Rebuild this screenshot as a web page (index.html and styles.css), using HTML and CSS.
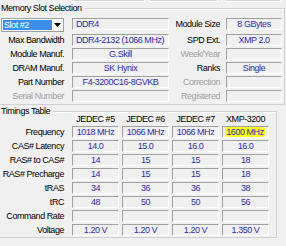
FILE: index.html
```html
<!DOCTYPE html>
<html lang="en">
<head>
    <meta charset="UTF-8">
    <meta name="viewport" content="width=device-width, initial-scale=1.0">
    <title>SPD</title>
    <link rel="stylesheet" href="styles.css">
</head>
<body>
    <div class="top-strip">
        <span class="stub stub-a"></span>
        <span class="stub stub-b"></span>
        <span class="stub stub-c"></span>
    </div>

    <div class="group slot-group">
        <div class="group-title">Memory Slot Selection</div>
        <div class="slot-grid">
            <div class="combo">
                <span class="combo-value">Slot #2</span>
                <span class="combo-btn">
                    <svg width="7" height="4" viewBox="0 0 7 4"><polygon points="0,0 7,0 3.5,4" fill="#000"/></svg>
                </span>
            </div>
            <div class="box left">DDR4</div>
            <div class="label">Module Size</div>
            <div class="box">8 GBytes</div>

            <div class="label">Max Bandwidth</div>
            <div class="box left">DDR4-2132 (1066 MHz)</div>
            <div class="label">SPD Ext.</div>
            <div class="box">XMP 2.0</div>

            <div class="label">Module Manuf.</div>
            <div class="box">G.Skill</div>
            <div class="label off">Week/Year</div>
            <div class="box"></div>

            <div class="label">DRAM Manuf.</div>
            <div class="box">SK Hynix</div>
            <div class="label">Ranks</div>
            <div class="box">Single</div>

            <div class="label">Part Number</div>
            <div class="box">F4-3200C16-8GVKB</div>
            <div class="label off">Correction</div>
            <div class="box"></div>

            <div class="label off">Serial Number</div>
            <div class="box"></div>
            <div class="label off">Registered</div>
            <div class="box"></div>
        </div>
    </div>

    <div class="group timings-group">
        <div class="group-title">Timings Table</div>
        <div class="timings-grid">
            <div></div>
            <div class="head">JEDEC #5</div>
            <div class="head">JEDEC #6</div>
            <div class="head">JEDEC #7</div>
            <div class="head">XMP-3200</div>

            <div class="label">Frequency</div>
            <div class="box">1018 MHz</div>
            <div class="box">1066 MHz</div>
            <div class="box">1066 MHz</div>
            <div class="box"><span class="marker">1600 MHz</span></div>

            <div class="label">CAS# Latency</div>
            <div class="box">14.0</div>
            <div class="box">15.0</div>
            <div class="box">16.0</div>
            <div class="box">16.0</div>

            <div class="label">RAS# to CAS#</div>
            <div class="box">14</div>
            <div class="box">15</div>
            <div class="box">15</div>
            <div class="box">18</div>

            <div class="label">RAS# Precharge</div>
            <div class="box">14</div>
            <div class="box">15</div>
            <div class="box">15</div>
            <div class="box">18</div>

            <div class="label">tRAS</div>
            <div class="box">34</div>
            <div class="box">36</div>
            <div class="box">36</div>
            <div class="box">38</div>

            <div class="label">tRC</div>
            <div class="box">48</div>
            <div class="box">50</div>
            <div class="box">50</div>
            <div class="box">56</div>

            <div class="label">Command Rate</div>
            <div class="box"></div>
            <div class="box"></div>
            <div class="box"></div>
            <div class="box"></div>

            <div class="label">Voltage</div>
            <div class="box">1.20 V</div>
            <div class="box">1.20 V</div>
            <div class="box">1.20 V</div>
            <div class="box">1.350 V</div>
        </div>
    </div>
</body>
</html>
```

FILE: styles.css
```css
body {
    margin: 0;
    width: 286px;
    height: 246px;
    overflow: hidden;
    background-color: #f0f0f0;
    font-family: "Liberation Sans", Arial, sans-serif;
    font-size: 9px;
    letter-spacing: -0.45px;
    color: #000;
}
.top-strip {
    display: flex;
    height: 2px;
}
.stub {
    height: 1px;
    border-bottom: 1px solid #fff;
    border-right: 1px solid #fff;
    background-color: #d6d6d6;
}
.stub-a {
    margin-left: 72px;
    width: 72px;
}
.stub-b {
    margin-left: 5px;
    width: 67px;
}
.stub-c {
    margin-left: 7px;
    width: 55px;
}
.group {
    border: 1px solid #d0d0d0;
    border-left: none;
    box-shadow: inset 0 1px 0 #fff;
}
.group-title {
    width: max-content;
    height: 11px;
    line-height: 11px;
    margin-top: -6px;
    padding: 0 3px 0 1px;
    background-color: #f0f0f0;
}
.slot-group {
    width: 284px;
    margin-top: 6px;
    padding-bottom: 2px;
}
.slot-grid {
    display: grid;
    grid-template-columns: 72px 97px 57px 56px;
    grid-template-rows: 14px repeat(5, 12px);
    row-gap: 2px;
    margin-top: 4px;
}
.timings-group {
    width: 276px;
    margin-top: 6px;
    padding-bottom: 1px;
}
.timings-grid {
    display: grid;
    grid-template-columns: 69px repeat(4, 47px);
    grid-template-rows: 11px repeat(8, 12px);
    column-gap: 3px;
    row-gap: 2px;
    margin-top: -4px;
}
.label {
    text-align: right;
    line-height: 12px;
    padding-right: 8px;
    white-space: nowrap;
}
.timings-grid .label {
    padding-right: 5px;
}
.slot-grid .label:nth-child(4n+3) {
    padding-right: 6px;
}
.label.off {
    color: #a0a0a0;
}
.head {
    text-align: center;
    line-height: 9px;
    padding-top: 2px;
}
.box {
    box-sizing: border-box;
    height: 12px;
    line-height: 10px;
    border: 1px solid;
    border-color: #a0a0a0 #fff #fff #a0a0a0;
    color: #2e2ea8;
    text-align: center;
    white-space: nowrap;
    overflow: hidden;
}
.box.left {
    text-align: left;
    padding-left: 3px;
}
.combo {
    box-sizing: border-box;
    display: flex;
    width: 63px;
    height: 14px;
    margin-left: 1px;
    padding: 1px;
    border: 1px solid #a0a0a0;
    background-color: #fff;
}
.combo-value {
    flex: 1;
    line-height: 10px;
    padding-left: 1px;
    background-color: #3d8ee8;
    color: #fff;
}
.combo-btn {
    width: 9px;
    display: flex;
    align-items: center;
    justify-content: center;
    margin-left: 1px;
    background-color: #f4f4f4;
}
.marker {
    display: block;
    height: 10px;
    margin: 0 3px 0 2px;
    border-radius: 2px 3px 3px 2px;
    background-color: #fbfb1e;
}
```
